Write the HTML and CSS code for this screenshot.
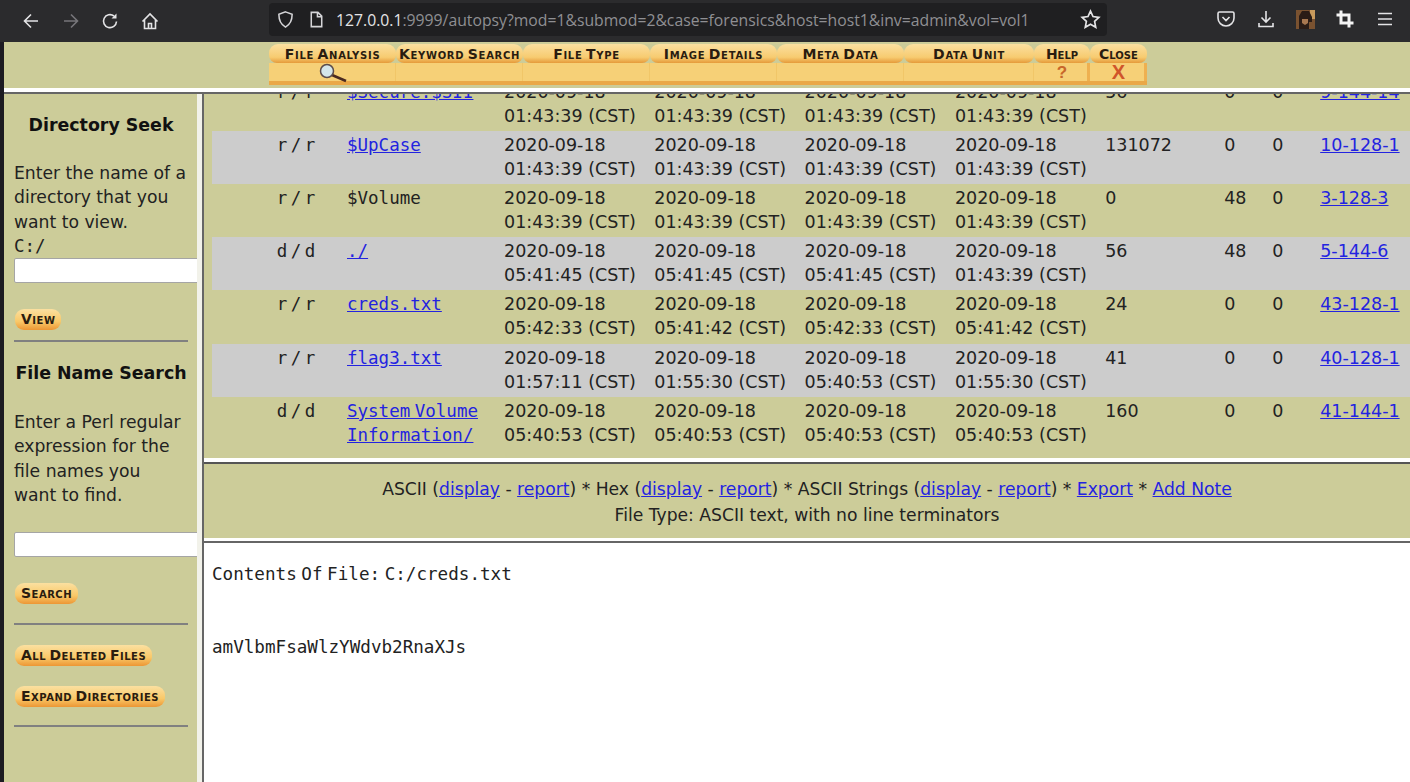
FILE: index.html
```html
<!DOCTYPE html>
<html lang="en">
<head>
    <meta charset="UTF-8">
    <title>Autopsy File Analysis</title>
    <link rel="stylesheet" href="styles.css">
</head>
<body>
    <div class="toolbar">
        <div class="nav-icons">
            <svg class="ico" viewBox="0 0 20 20"><path d="M17 10H3.500M10 3.500L3.500 10l6.500 6.500"/></svg>
            <svg class="ico ico-off" viewBox="0 0 20 20"><path d="M3 10h13.500M10 3.500l6.500 6.500-6.500 6.500"/></svg>
            <svg class="ico" viewBox="0 0 20 20"><path d="M16.500 10.500a6.500 6.500 0 1 1-2.500-5.500"/><path class="solid" d="M16.500 2.500v5h-5z"/></svg>
            <svg class="ico" viewBox="0 0 20 20"><path d="M2.500 10.500L10 3l7.500 7.500M4.500 9v8.500h11V9M8.500 17.500v-5h3v5"/></svg>
        </div>
        <div class="urlbar">
            <svg class="ico ico-url" viewBox="0 0 20 20"><path d="M10 2l7 2.500c0 6-1.500 10.500-7 13.500-5.500-3-7-7.500-7-13.500z"/></svg>
            <svg class="ico ico-url ico-page" viewBox="0 0 20 20"><path d="M4.500 2.500h7l4 4v11h-11zM11 2.500v4.500h4.500"/></svg>
            <div class="url"><span class="host">127.0.0.1</span>:9999/autopsy?mod=1&amp;submod=2&amp;case=forensics&amp;host=host1&amp;inv=admin&amp;vol=vol1</div>
            <svg class="ico ico-star" viewBox="0 0 20 20"><path d="M10 2l2.400 5.200 5.600.7-4.100 3.900 1.100 5.600-5-2.800-5 2.800 1.100-5.600L2 7.900l5.600-.7z"/></svg>
        </div>
        <div class="tool-icons">
            <svg class="ico" viewBox="0 0 20 20"><path d="M3.500 3h13a1.500 1.500 0 0 1 1.500 1.500V9a8 8 0 0 1-16 0V4.500A1.500 1.500 0 0 1 3.500 3zM6.500 8l3.500 3.500L13.500 8"/></svg>
            <svg class="ico" viewBox="0 0 20 20"><path d="M10 2v11M5.500 8.500L10 13l4.500-4.500M3 14v3.500h14V14"/></svg>
            <svg class="avatar" viewBox="0 0 19 19"><rect width="19" height="19" fill="#7a5230"/><rect x="14" width="5" height="9" fill="#c89a5c"/><path d="M3 19V6l3-5h7l3 6v5h-3v7z" fill="#2a1c16"/><path d="M6 9h6v4l-3 2-3-2z" fill="#a87850"/></svg>
            <svg class="ico ico-crop" viewBox="0 0 20 20"><path d="M6 1.500V14h12.500M1.500 6H14v12.500"/></svg>
            <svg class="ico" viewBox="0 0 20 20"><path d="M3 4.500h14M3 10h14M3 15.500h14"/></svg>
        </div>
    </div>

    <div class="page">
        <div class="menu-frame">
            <div class="menu">
                <div class="tab"><span class="tab-top">File Analysis</span><span class="tab-low"><svg class="glass" viewBox="0 0 30 20"><path class="handle" d="M13 12l14 6"/><circle cx="8" cy="8" r="6.500"/></svg></span></div>
                <div class="tab"><span class="tab-top">Keyword Search</span><span class="tab-low"></span></div>
                <div class="tab"><span class="tab-top">File Type</span><span class="tab-low"></span></div>
                <div class="tab"><span class="tab-top">Image Details</span><span class="tab-low"></span></div>
                <div class="tab"><span class="tab-top">Meta Data</span><span class="tab-low"></span></div>
                <div class="tab"><span class="tab-top">Data Unit</span><span class="tab-low"></span></div>
                <div class="tab"><span class="tab-top">Help</span><span class="tab-low mark-help">?</span></div>
                <div class="tab"><span class="tab-top">Close</span><span class="tab-low mark-close">X</span></div>
            </div>
        </div>

        <div class="frames">
            <div class="side">
                <h3>Directory Seek</h3>
                <p>Enter the name of a directory that you want to view.<br><span class="mono">C:/</span></p>
                <input class="side-input" type="text">
                <button class="pill pill-view">View</button>
                <hr>
                <h3 class="h-search">File Name Search</h3>
                <p>Enter a Perl regular expression for the file names you want to find.</p>
                <input class="side-input input-search" type="text">
                <button class="pill pill-search">Search</button>
                <hr class="hr-search">
                <button class="pill pill-deleted">All Deleted Files</button>
                <button class="pill pill-expand">Expand Directories</button>
                <hr class="hr-end">
            </div>

            <div class="main">
                <div class="listing">
                    <table>
                        <tr><td class="type">r / r</td><td class="name"><a href="#">$Secure:$SII</a></td><td>2020-09-18<br>01:43:39 (CST)</td><td>2020-09-18<br>01:43:39 (CST)</td><td>2020-09-18<br>01:43:39 (CST)</td><td>2020-09-18<br>01:43:39 (CST)</td><td>56</td><td>0</td><td>0</td><td><a href="#">9-144-14</a></td></tr>
                        <tr class="alt"><td class="type">r / r</td><td class="name"><a href="#">$UpCase</a></td><td>2020-09-18<br>01:43:39 (CST)</td><td>2020-09-18<br>01:43:39 (CST)</td><td>2020-09-18<br>01:43:39 (CST)</td><td>2020-09-18<br>01:43:39 (CST)</td><td>131072</td><td>0</td><td>0</td><td><a href="#">10-128-1</a></td></tr>
                        <tr><td class="type">r / r</td><td class="name">$Volume</td><td>2020-09-18<br>01:43:39 (CST)</td><td>2020-09-18<br>01:43:39 (CST)</td><td>2020-09-18<br>01:43:39 (CST)</td><td>2020-09-18<br>01:43:39 (CST)</td><td>0</td><td>48</td><td>0</td><td><a href="#">3-128-3</a></td></tr>
                        <tr class="alt"><td class="type">d / d</td><td class="name"><a href="#">./</a></td><td>2020-09-18<br>05:41:45 (CST)</td><td>2020-09-18<br>05:41:45 (CST)</td><td>2020-09-18<br>05:41:45 (CST)</td><td>2020-09-18<br>01:43:39 (CST)</td><td>56</td><td>48</td><td>0</td><td><a href="#">5-144-6</a></td></tr>
                        <tr><td class="type">r / r</td><td class="name"><a href="#">creds.txt</a></td><td>2020-09-18<br>05:42:33 (CST)</td><td>2020-09-18<br>05:41:42 (CST)</td><td>2020-09-18<br>05:42:33 (CST)</td><td>2020-09-18<br>05:41:42 (CST)</td><td>24</td><td>0</td><td>0</td><td><a href="#">43-128-1</a></td></tr>
                        <tr class="alt"><td class="type">r / r</td><td class="name"><a href="#">flag3.txt</a></td><td>2020-09-18<br>01:57:11 (CST)</td><td>2020-09-18<br>01:55:30 (CST)</td><td>2020-09-18<br>05:40:53 (CST)</td><td>2020-09-18<br>01:55:30 (CST)</td><td>41</td><td>0</td><td>0</td><td><a href="#">40-128-1</a></td></tr>
                        <tr><td class="type">d / d</td><td class="name"><a href="#">System Volume Information/</a></td><td>2020-09-18<br>05:40:53 (CST)</td><td>2020-09-18<br>05:40:53 (CST)</td><td>2020-09-18<br>05:40:53 (CST)</td><td>2020-09-18<br>05:40:53 (CST)</td><td>160</td><td>0</td><td>0</td><td><a href="#">41-144-1</a></td></tr>
                    </table>
                </div>
                <div class="actions">
                    <div>ASCII (<a href="#">display</a> - <a href="#">report</a>) * Hex (<a href="#">display</a> - <a href="#">report</a>) * ASCII Strings (<a href="#">display</a> - <a href="#">report</a>) * <a href="#">Export</a> * <a href="#">Add Note</a></div>
                    <div class="filetype">File Type: ASCII text, with no line terminators</div>
                </div>
                <div class="contents">
                    <div>Contents Of File: C:/creds.txt</div>
                    <div class="file-text">amVlbmFsaWlzYWdvb2RnaXJs</div>
                </div>
            </div>
        </div>
    </div>
</body>
</html>
```

FILE: styles.css
```css
html, body {
    margin: 0;
    padding: 0;
    height: 782px;
    overflow: hidden;
}
body {
    font-family: "DejaVu Sans", sans-serif;
    font-size: 17.5px;
    line-height: 24px;
    color: #222;
    background-color: #fff;
}
a {
    color: #2323e0;
}

/* browser chrome */
.toolbar {
    height: 42px;
    background-color: #2b2b2d;
    display: flex;
    align-items: center;
}
.ico {
    width: 20px;
    height: 20px;
    fill: none;
    stroke: #e4e4e6;
    stroke-width: 1.6;
    flex: none;
}
.ico .solid {
    fill: #e4e4e6;
    stroke: none;
}
.ico-off {
    stroke: #77767a;
}
.nav-icons {
    display: flex;
    gap: 19.5px;
    padding-left: 21px;
    width: 269px;
    box-sizing: border-box;
}
.urlbar {
    width: 838px;
    height: 33px;
    margin-top: -3px;
    background-color: #1f1f21;
    border-radius: 4px;
    display: flex;
    align-items: center;
    padding-left: 7px;
    box-sizing: border-box;
}
.ico-url {
    stroke: #d5d5d8;
    width: 19px;
    height: 19px;
}
.ico-page {
    margin-left: 12px;
    margin-right: 10px;
}
.url {
    font-family: "Open Sans", sans-serif;
    font-size: 15.750px;
    color: #8f8f93;
    white-space: nowrap;
    width: 744px;
    flex: none;
}
.host {
    color: #e4e4e6;
}
.ico-star {
    width: 21px;
    height: 21px;
}
.tool-icons {
    display: flex;
    align-items: center;
    gap: 20px;
    padding-left: 109px;
    margin-top: -4px;
}
.avatar {
    width: 19px;
    height: 19px;
}
.ico-crop {
    stroke-width: 3;
    stroke: #f4f4f4;
}

/* autopsy frames */
.page {
    height: 740px;
    margin-left: 4px;
    background-color: #fff;
    box-shadow: -4px 0 0 #1c1b22;
}
.menu-frame {
    height: 46px;
    background-color: #cccc99;
    padding-left: 265px;
    padding-top: 2px;
    box-sizing: border-box;
}
.menu {
    display: flex;
    width: 878px;
    height: 41px;
}
.tab {
    width: 127px;
    flex: none;
    display: flex;
    flex-direction: column;
}
.tab:nth-child(6) {
    width: 130px;
}
.tab:nth-child(7) {
    width: 56px;
}
.tab:nth-child(8) {
    width: 57px;
}
.tab-top {
    height: 19px;
    font-weight: bold;
    font-variant: small-caps;
    font-size: 14px;
    line-height: 20px;
    letter-spacing: 0.7px;
    word-spacing: -2px;
    color: #2a1c10;
    text-align: center;
    white-space: nowrap;
    background: linear-gradient(#fbe0a0, #f7cb70 70%, #e59a3a);
    border-radius: 9px 9px 8px 8px;
}
.tab:nth-child(n+7) .tab-top {
    letter-spacing: 0;
}
.tab-low {
    height: 22px;
    text-align: center;
    line-height: 19px;
    font-family: "Liberation Sans", sans-serif;
    font-weight: bold;
    font-size: 17px;
    background: #f6d077;
    box-shadow: inset 0 -4px 0 #eaa848, inset -1px 0 0 #f1c668;
}
.tab:nth-child(n+7) .tab-low {
    box-shadow: inset 0 -4px 0 #eaa848, inset -3px 0 0 #eeb050;
}
.glass {
    display: block;
    width: 30px;
    height: 20px;
    margin-left: 50px;
    fill: #d4e6ea;
    stroke: #5a4c4c;
    stroke-width: 1.5;
}
.glass .handle {
    stroke: #4a2a20;
    stroke-width: 2.500;
}
.mark-help {
    color: #c8662a;
}
.mark-close {
    color: #d0552a;
    font-size: 20px;
}
.frames {
    display: flex;
    height: 690px;
    margin-top: 4px;
    border-top: 2px solid #666;
    box-sizing: border-box;
}
.side {
    width: 193px;
    flex: none;
    background-color: #cccc99;
    padding: 17px 10px 0 10px;
    box-sizing: border-box;
    overflow: hidden;
}
.side h3 {
    font-size: 17.400px;
    line-height: 28px;
    margin: 0 -1px 22px 0;
    color: #111;
    text-align: center;
    white-space: nowrap;
}
.side p {
    margin: 0;
    font-size: 17.200px;
    line-height: 24.300px;
}
.mono {
    font-family: "DejaVu Sans Mono", monospace;
    font-size: 17.500px;
}
.side-input {
    display: block;
    width: 190px;
    height: 25px;
    padding: 0;
    background: #fff;
    border: 1px solid #a5a5a5;
    border-radius: 2px;
    box-sizing: border-box;
}
.input-search {
    margin-top: 25px;
}
.pill {
    display: block;
    height: 21px;
    margin-left: 1px;
    padding: 0 6px;
    font-family: "DejaVu Sans", sans-serif;
    font-weight: bold;
    font-variant: small-caps;
    font-size: 14px;
    line-height: 19px;
    letter-spacing: 0.5px;
    word-spacing: -2px;
    color: #2a1c10;
    background: linear-gradient(#fbe0a0, #f9c868 60%, #ec9634);
    border: 0;
    border-radius: 9px;
    white-space: nowrap;
}
.pill-view {
    margin-top: 26px;
}
.pill-search {
    margin-top: 26px;
}
.pill-deleted {
    margin-top: 20px;
}
.pill-expand {
    margin-top: 20px;
}
.side hr {
    height: 2px;
    margin: 10px -1px 0 0;
    border: 0;
    background-color: #808080;
}
.side .hr-search {
    margin-top: 19px;
}
.side .hr-end {
    margin-top: 18px;
}
.side h3.h-search {
    margin-top: 17px;
    margin-bottom: 23px;
}
.main {
    flex: 1;
    min-width: 0;
    border-left: 2px solid #666;
    margin-left: 5px;
    box-shadow: -5px 0 0 #f2f2ea;
    display: flex;
    flex-direction: column;
}
.listing {
    height: 364px;
    background-color: #cccc99;
    overflow: hidden;
    padding-left: 8px;
}
.listing table {
    width: 1250px;
    margin-top: -16.400px;
    border-collapse: collapse;
    table-layout: fixed;
}
.listing td {
    height: 53.200px;
    padding: 2px 0 3px 0;
    vertical-align: top;
    box-sizing: border-box;
    white-space: nowrap;
}
.listing td:nth-child(1) { width: 135px; }
.listing td:nth-child(2) { width: 157px; }
.listing td:nth-child(3),
.listing td:nth-child(4),
.listing td:nth-child(5),
.listing td:nth-child(6) { width: 150.300px; }
.listing td:nth-child(7) { width: 119px; }
.listing td:nth-child(8) { width: 48px; }
.listing td:nth-child(9) { width: 48px; }
.alt td {
    background-color: #cccccc;
}
.listing .type {
    font-family: "DejaVu Sans Mono", monospace;
    font-size: 17.500px;
    text-align: center;
    padding-left: 33px;
    word-spacing: -7px;
}
.listing .name {
    font-family: "DejaVu Sans Mono", monospace;
    font-size: 17.500px;
    white-space: normal;
    word-spacing: -6px;
}
.actions {
    height: 76px;
    background-color: #cccc99;
    margin-top: 4px;
    border-top: 2px solid #555;
    box-sizing: border-box;
    text-align: center;
    padding-top: 13px;
    font-size: 17.170px;
}
.filetype {
    margin-top: 2px;
}
.contents {
    flex: 1;
    margin-top: 3px;
    border-top: 2px solid #666;
    padding: 19px 0 0 8px;
    font-family: "DejaVu Sans Mono", monospace;
    font-size: 17.600px;
    word-spacing: -6px;
}
.file-text {
    margin-top: 49px;
}
```
